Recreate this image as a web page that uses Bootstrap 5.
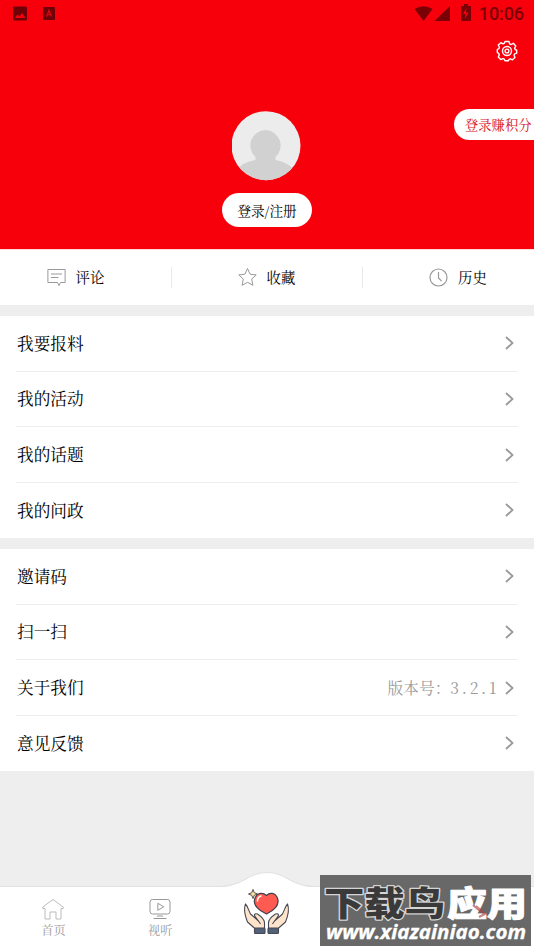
<!DOCTYPE html>
<html lang="zh-CN">
<head>
<meta charset="utf-8">
<meta name="viewport" content="width=device-width, initial-scale=1">
<title>我的</title>
<link href="https://cdn.jsdelivr.net/npm/bootstrap@5.3.0/dist/css/bootstrap.min.css" rel="stylesheet">
<style>
body{font-family:"Noto Serif CJK SC","Noto Serif SC","Noto Sans CJK SC",serif;font-weight:400;background:#eee;color:#000;height:950px;overflow:hidden}
svg{display:block;flex:none}
.screen{height:950px}
.hero{height:250px;background:#f7000c;border-bottom:1px solid #ffdcd8}
.status{height:27px;padding:0 10px 0 12px;color:#7a0006}
.clock{font:500 18px/27px Roboto,sans-serif;letter-spacing:-.1px}
.settings{padding:13px 16px 0 0}
.avatar-row{padding-top:46px}
.login{width:90px;height:34px;margin-top:12px;font-size:13.6px;line-height:34px}
.points{top:109px;right:0;width:80px;height:31px;padding-left:11px;border-radius:16px 0 0 16px;font-size:13.3px;line-height:31px;color:#d8101c}
.shortcuts{height:55px}
.shortcuts>div{font-size:14.4px;gap:10px;line-height:20px;padding-bottom:1px}
.shortcuts>div+div::before{content:"";position:absolute;left:0;top:17px;height:21px;border-left:1px solid #eaeaea}
.short-a{width:171px;padding-right:20px}
.short-b{width:191px}
.short-c{width:172px;padding-left:20px}
.menu{margin-top:11px;padding:0 16px;height:222px}
.menu+.menu{margin-top:11px}
.menu>div{height:55.65px;padding:0 4px 0 1px;font-size:16.65px;border-bottom:1px solid #eee}
.menu>div:last-child{border:0;height:55px}
.version{font-size:15.7px;color:#999;margin-right:6px}
.version span{letter-spacing:2.7px}
.tabs{height:64px;border-top:1px solid #e2e2e2}
.tab{width:106.8px;padding-top:11px;font-size:12.2px;line-height:18px;color:#999}
.hands{top:-16px;left:216px}
.mark-box{left:320px;top:875px}
</style>
</head>
<body>
<div class="screen position-relative d-flex flex-column">
 <header class="hero flex-shrink-0">
  <div class="status d-flex align-items-center">
   <svg width="16" height="16" viewBox="0 0 16 16"><path fill="#700007" fill-rule="evenodd" d="M2.500 .5h11Q15 .5 15 2v11q0 1.500-1.500 1.500h-11Q1 14.500 1 13V2Q1 .5 2.500 .5zM3 12h10.500L10 7 7.400 10.500 5.400 8.500z"/></svg>
   <svg class="ms-2 ps-1" width="22" height="14" viewBox="-1 0 16 14"><rect x="1" y="0" width="12" height="13" rx="1" fill="#700007"/><path d="M4.500 9.500 7 3.500l2.500 6M5.500 7.700h3" fill="none" stroke="#dc0713" stroke-width="1.300"/></svg>
   <svg class="ms-auto me-2" width="57" height="20" viewBox="0 0 57 20" fill="#7a0006"><path d="M.5 5Q9.500-.5 18.500 5L9.500 17zM36 2v15H20.500zM48 2h2V0h4v2h2q1 0 1 1v13q0 1-1 1h-8q-1 0-1-1V3q0-1 1-1z"/><path fill="#f7000c" d="m52.500 4-3.500 6h2.500l-.8 5 3.600-6.500h-2.500z"/></svg>
   <span class="clock">10:06</span>
  </div>
  <div class="settings d-flex justify-content-end">
   <svg width="22" height="22" viewBox="0 0 22 22" fill="none" stroke="#fff" stroke-width="1.400" stroke-linejoin="round"><path d="M9 1.500h4l.6 2.300 1.500.7 2.200-1.200 2.500 2.700-1.200 2.100.6 1.400 1.500.7v3l-2 .7-.7 1.400 1 2.200-2.600 2.300-2-1-1.300.5-.8 1.500H9l-.7-1.600-1.500-.6-2 1L2.300 17l1-2.100-.7-1.500L1.300 12.500v-3l1.500-.8.6-1.500L2.300 5l2.600-2.300 2 1.100 1.500-.6z"/><circle cx="11" cy="11" r="4.500"/><circle cx="11" cy="11" r="1.900"/></svg>
  </div>
  <div class="avatar-row d-flex flex-column align-items-center">
   <svg width="70" height="73" viewBox="0 0 70 73"><defs><clipPath id="face"><circle cx="34" cy="37.700" r="34.500"/></clipPath></defs><g clip-path="url(#face)"><path fill="#ececec" d="M-1 0h71v73H-1z"/><path fill="#d1d1d1" d="M33.500 22a15.500 15.500 0 0 1 10 27v3Q58 55 63 63v10H4V63q6-9 19.500-11v-3a15.500 15.500 0 0 1 10-27z"/></g></svg>
   <div class="login bg-white rounded-pill text-center">登录/注册</div>
  </div>
  <div class="points position-absolute bg-white text-nowrap">登录赚积分</div>
 </header>
 <section class="shortcuts d-flex bg-white flex-shrink-0">
  <div class="short-a position-relative d-flex align-items-center justify-content-center"><svg width="19" height="19" viewBox="0 0 19 19" fill="none" stroke="#999"><path d="M.9 1.500h17.200v13h-4.600l-1.500 3-1.500-3H.9zM4 6h11M4 9.500h7.500"/></svg><span>评论</span></div>
  <div class="short-b position-relative d-flex align-items-center justify-content-center"><svg width="19" height="20" viewBox="0 0 19 20" fill="none" stroke="#999" stroke-linejoin="round"><path d="m9.500 1.500 2.600 5.700 6.100.7-4.500 4.200 1.200 6.200-5.400-3-5.400 3 1.200-6.200L.8 7.900l6.100-.7z"/></svg><span>收藏</span></div>
  <div class="short-c position-relative d-flex align-items-center justify-content-center"><svg width="19" height="19" viewBox="0 0 19 19" fill="none" stroke="#999" stroke-width="1.200"><circle cx="9.500" cy="9.500" r="8.500"/><path d="M9.500 4v6l3 3"/></svg><span>历史</span></div>
 </section>
 <svg width="0" height="0" class="position-absolute"><symbol id="chev" viewBox="0 0 9 16"><path d="m1 2 6.500 6L1 14" fill="none" stroke="#999" stroke-width="1.800"/></symbol></svg>
 <section class="menu bg-white flex-shrink-0">
  <div class="d-flex align-items-center justify-content-between">我要报料<svg width="9" height="16"><use href="#chev"/></svg></div>
  <div class="d-flex align-items-center justify-content-between">我的活动<svg width="9" height="16"><use href="#chev"/></svg></div>
  <div class="d-flex align-items-center justify-content-between">我的话题<svg width="9" height="16"><use href="#chev"/></svg></div>
  <div class="d-flex align-items-center justify-content-between">我的问政<svg width="9" height="16"><use href="#chev"/></svg></div>
 </section>
 <section class="menu bg-white flex-shrink-0">
  <div class="d-flex align-items-center justify-content-between">邀请码<svg width="9" height="16"><use href="#chev"/></svg></div>
  <div class="d-flex align-items-center justify-content-between">扫一扫<svg width="9" height="16"><use href="#chev"/></svg></div>
  <div class="d-flex align-items-center">关于我们<span class="version ms-auto">版本号：<span>3.2.1</span></span><svg width="9" height="16"><use href="#chev"/></svg></div>
  <div class="d-flex align-items-center justify-content-between">意见反馈<svg width="9" height="16"><use href="#chev"/></svg></div>
 </section>
 <nav class="tabs position-relative d-flex bg-white mt-auto flex-shrink-0">
  <div class="tab d-flex flex-column align-items-center"><svg width="22" height="23" viewBox="0 0 22 23" fill="none" stroke="#bbb"><path d="M.8 9 11 1.500 21.200 9v1.500H19V21h-5v-7H8v7H3V10.500H.8z"/></svg>首页</div>
  <div class="tab d-flex flex-column align-items-center"><svg width="22" height="23" viewBox="0 0 22 23" fill="none" stroke="#999"><rect x="1" y="1.500" width="20" height="14.500" rx="2.500"/><path d="m8.800 5.300 6 3.500-6 3.500zM8 18h6M4.500 20.500h13"/></svg>视听</div>
  <svg class="hands position-absolute" width="102" height="78" viewBox="0 0 102 78">
   <path d="M0 16.500Q17 16.500 29 9 40 1.500 51 1.500T73 9Q85 16.500 102 16.500V30H0z" fill="#fff"/><path d="M0 15.500Q17 15.500 29 8.500 40 1.500 51 1.500T73 8.500Q85 15.500 102 15.500" fill="none" stroke="#e2e2e2"/>
   <g transform="translate(-1 -1)"><path d="M51.500 25.500C55 22 60 23 62 27c4 8-4 14-10.500 17C45 41 36 35 40.500 27c2-4 7-5 11-1.500z" fill="#ff5b50" stroke="#40424b" stroke-width="1.200"/>
   <path d="M42.500 31q0-4 3.500-5" fill="none" stroke="#fff" stroke-width="1.500" stroke-linecap="round"/>
   <path d="m38 19.500 1.300 3.200 3.200 1.300-3.200 1.300L38 28.500l-1.300-3.200-3.200-1.300 3.200-1.300z" fill="#ffe1a0" stroke="#56504b"/>
   <g id="palm" fill="#ffe4cc" stroke="#464951" stroke-width="1.100" stroke-linejoin="round"><path d="M30.500 34c-2 5 0 13 2 18l8 7v4h9V53c0-4-4-7-7-9-3-1-4 1-2 3l3 4-8-7c-2-4-3-8-5-10zM43.500 51l2 3"/><rect x="39.500" y="58" width="10.500" height="5.500" rx="1" fill="#52617a"/></g><use href="#palm" transform="matrix(-1 0 0 1 103 0)"/></g>
  </svg>
 </nav>
 <svg class="mark-box position-absolute" width="211" height="71" viewBox="0 0 211 71">
  <path fill="#686868" d="M0 0h211v71H0z"/>
  <g font-family="'Noto Sans CJK SC',sans-serif" font-weight="900" font-size="34" paint-order="stroke" stroke-linejoin="round"><text x="4" y="41" textLength="121" lengthAdjust="spacingAndGlyphs" fill="#3a3a3a" stroke="#d5d5d5" stroke-width="2.500">下载鸟</text><text x="127" y="41" textLength="80" lengthAdjust="spacingAndGlyphs" fill="#fff" stroke="#fff" stroke-width="1">应用</text></g>
  <path d="M153 30q5 5 12 9l-6 3m-3-11 9 8" fill="none" stroke="#b04040" stroke-opacity=".65" stroke-width="2"/>
  <text x="6" y="64" textLength="200" lengthAdjust="spacingAndGlyphs" font-family="'Open Sans','Noto Sans',sans-serif" font-size="19" font-weight="700" font-style="italic" fill="#fff" stroke="#fff" stroke-width=".3">www.xiazainiao.com</text>
 </svg>
</div>
<script src="https://cdn.jsdelivr.net/npm/bootstrap@5.3.0/dist/js/bootstrap.bundle.min.js"></script>
</body>
</html>
